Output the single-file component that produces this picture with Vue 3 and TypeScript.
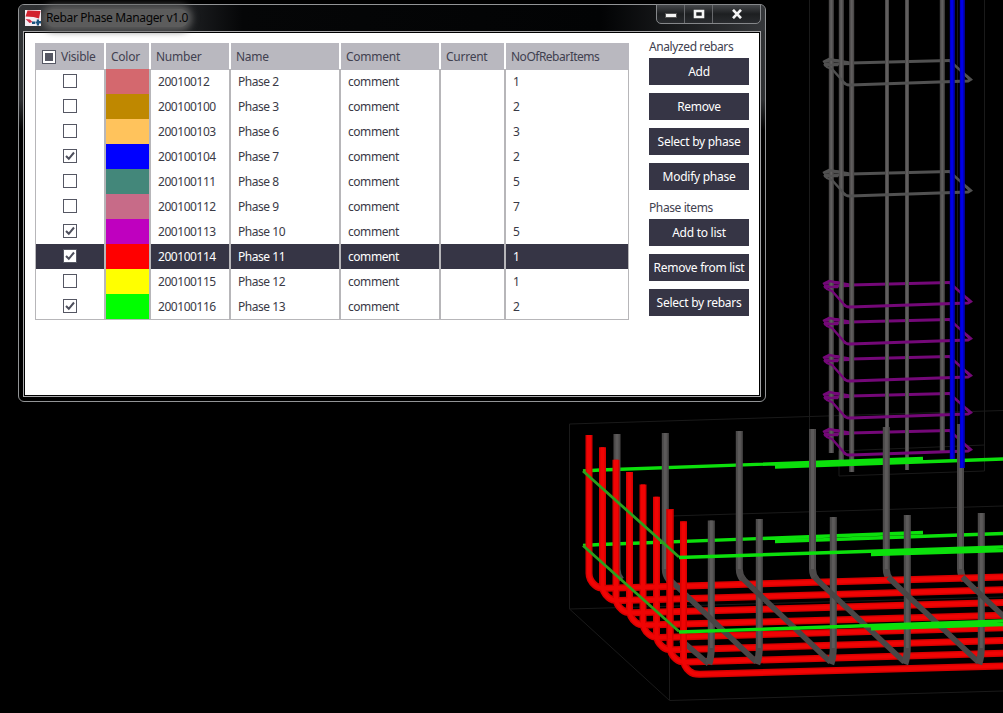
<script setup lang="ts">
interface Phase {
  visible: boolean
  color: string
  number: string
  name: string
  comment: string
  current: string
  items: number
  selected?: boolean
}

const comment = 'comment'
const current = ''
const phases: Phase[] = [
  { visible: false, color: '#d4686e', number: '20010012', name: 'Phase 2', comment, current, items: 1 },
  { visible: false, color: '#bf8800', number: '200100100', name: 'Phase 3', comment, current, items: 2 },
  { visible: false, color: '#ffc35c', number: '200100103', name: 'Phase 6', comment, current, items: 3 },
  { visible: true, color: '#0000ff', number: '200100104', name: 'Phase 7', comment, current, items: 2 },
  { visible: false, color: '#43877a', number: '200100111', name: 'Phase 8', comment, current, items: 5 },
  { visible: false, color: '#c76b88', number: '200100112', name: 'Phase 9', comment, current, items: 7 },
  { visible: true, color: '#bf00bf', number: '200100113', name: 'Phase 10', comment, current, items: 5 },
  { visible: true, color: '#ff0000', number: '200100114', name: 'Phase 11', comment, current, items: 1, selected: true },
  { visible: false, color: '#ffff00', number: '200100115', name: 'Phase 12', comment, current, items: 1 },
  { visible: true, color: '#00ff00', number: '200100116', name: 'Phase 13', comment, current, items: 2 },
]

const headers = ['Color', 'Number', 'Name', 'Comment', 'Current', 'NoOfRebarItems']

const groups = [
  { label: 'Analyzed rebars', buttons: ['Add', 'Remove', 'Select by phase', 'Modify phase'] },
  { label: 'Phase items', buttons: ['Add to list', 'Remove from list', 'Select by rebars'] },
]

// Vertical bars of the column: x, bottom, width
const columnBars = [
  [831.3, 453, 5], [841.3, 463, 5], [851.7, 472, 5],
  [887, 428, 4], [907, 470, 4], [942.3, 452, 5],
]
const blueBars = [[952.3, 459], [962.3, 468]]

// Stirrups around the column
const stirrups = [63, 174, 285, 322, 359, 396, 433].map((y, i) => ({ y, tone: i < 2 ? 'grey' : 'purple' }))

// U-shaped foundation bars: back leg x/top, front leg x/top
const uBars = [
  [617, 434, 711.3, 520.5], [665.3, 433, 759.3, 519], [739.3, 431, 833.3, 517],
  [812.5, 429, 907.3, 515], [886.3, 427, 981.3, 513], [960.5, 424, 1055, 511],
]

// Bottom bars that bend up on the left side
const redBars = Array.from({ length: 8 }, (_, i) => {
  const x = 589 + 13.5 * i
  const y = 588.2 + 12.3 * i
  return `M${x} ${435 + 12.35 * i}V${y - 15}Q${x} ${y - 8} ${x + 6} ${y - 3}Q${x + 10} ${y + 0.4} ${x + 17} ${y}L1005 ${577 + 12.7 * i}`
})
</script>

<template>
  <main class="stage">
    <svg class="scene" width="1003" height="713" viewBox="0 0 1003 713">
      <g class="outline">
        <path d="M809.5 0V476M984.5 0V471L839 476V451L985 445M569.5 609V424L1003 410.5M569.5 609L669.5 700.5L1003 691M669.5 700V516L1003 506M569.5 609L1003 597M957.5 0V440" />
      </g>

      <g v-for="s in stirrups" :key="'b' + s.y" :class="['stirrup', s.tone]" :transform="`translate(0 ${s.y})`">
        <path d="M824 -1.5L836 -2.5L850 0L950 -2.5" />
        <path class="thin" d="M950 -2L971 17" />
        <path d="M850 .5L824 1.5" />
      </g>

      <path v-for="b in columnBars" :key="b[0]" class="bar" :stroke-width="b[2]" :d="`M${b[0]} 0V${b[1]}`" />
      <path v-for="b in columnBars" :key="'h' + b[0]" class="bar-light" :d="`M${b[0]} 0V${b[1]}`" />

      <g v-for="s in stirrups" :key="'f' + s.y" :class="['stirrup', s.tone]" :transform="`translate(0 ${s.y})`">
        <path class="thin" d="M824 1L827 4L832 6L845 20.5" />
        <path class="thin" d="M823 -1L829 -4L840 -2M824 2L838 2" />
        <path d="M844 19.5Q846 22.3 850 22L968 18L970.5 16.5L966 12.5" />
      </g>

      <g class="green">
        <path d="M583 471L600 470L923 458.5M775 467L1003 459" />
        <path d="M583 545.5L600 544.5L923 532.5M775 541.5L1003 533.5" />
      </g>

      <g v-for="b in uBars" :key="'u' + b[0]">
        <path class="bar" stroke-width="7" :d="`M${b[0]} ${b[1]}V569Q${b[0]} 575 ${b[0] + 4} 580`" />
        <path class="bar-light wide" :d="`M${b[0]} ${b[1]}V569`" />
      </g>

      <path v-for="d in redBars" :key="d" class="red" :d="d" />
      <path v-for="d in redBars" :key="'l' + d" class="red-light" :d="d" />

      <g v-for="(b, i) in uBars" :key="'v' + b[0]">
        <path v-if="i > 0" class="diagonal" :d="`M${b[0] + 2} 577L${b[0] + 9} 584L${b[2] - 3} 662`" />
        <path v-else class="diagonal" d="M681 640L708.5 664" />
        <path class="bar" stroke-width="7" :d="`M${b[2]} ${b[3]}V646Q${b[2]} 657 ${b[2] - 2.5} 664`" />
        <path class="bar-light wide" :d="`M${b[2]} ${b[3]}V648`" />
      </g>
      <path v-for="i in [6, 7]" :key="'r' + i" class="red" :d="`M${589 + 13.5 * i} ${435 + 12.35 * i}V${565 + 12.3 * i}`" />
      <path v-for="i in [6, 7]" :key="'rl' + i" class="red-light" :d="`M${589 + 13.5 * i} ${436 + 12.35 * i}V${565 + 12.3 * i}`" />

      <path v-for="b in blueBars" :key="b[0]" class="blue" :d="`M${b[0]} 0V${b[1]}`" />
      <path class="blue-light" d="M951.8 0V459M961.8 0V468" />

      <g class="green">
        <path class="slant" d="M583 471L679 557M583 545.5L679 631.5" />
        <path d="M679 557.5L1003 547M871 554.5L1003 550.5" />
        <path d="M679 632L1003 621M871 628.8L1003 624.5" />
      </g>
    </svg>

    <section class="window">
      <header class="titlebar">
        <svg class="logo" width="16" height="16" viewBox="0 0 16 16">
          <rect width="16" height="16" fill="#f4eef3" />
          <path d="M2.5 .5L15.5 1L14 8.5L8.5 7L.5 6.5Z" fill="#d2222f" />
          <path d="M.5 9L5 9.5L7.5 12L4.5 13Z" fill="#d2304a" />
          <path d="M7 11.5H10V14H7ZM11.8 9.5H14V11H16V13.5H14V15.5H11.8V13.5H10.5V11.5H11.8Z" fill="#1c5580" />
        </svg>
        <h1 class="title">Rebar Phase Manager v1.0</h1>
        <nav class="controls">
          <span class="control minimize">
            <svg width="12" height="6" viewBox="0 0 12 6"><rect x=".5" y=".5" width="11" height="4" fill="#f4f4f4" stroke="#555" /></svg>
          </span>
          <span class="control maximize">
            <svg width="12" height="10" viewBox="0 0 12 10"><path d="M2 2H10V8H2Z" fill="none" stroke="#f4f4f4" stroke-width="2.6" /></svg>
          </span>
          <span class="control close">
            <svg width="12" height="10" viewBox="0 0 12 10"><path d="M2 .8L10 9.2M10 .8L2 9.2" stroke="#f4f4f4" stroke-width="2.6" /></svg>
          </span>
        </nav>
      </header>

      <div class="content">
        <div class="table">
          <div class="row head">
            <div class="cell first">
              <span class="check mixed"></span>
              <span>Visible</span>
            </div>
            <div v-for="h in headers" :key="h" class="cell">{{ h }}</div>
          </div>
          <div v-for="p in phases" :key="p.number" :class="['row', { selected: p.selected }]">
            <div class="cell center">
              <span class="check">
                <svg v-if="p.visible" width="12" height="12" viewBox="0 0 12 12">
                  <path d="M2 6L4.8 8.8L10 2.5" fill="none" stroke="#4d4f5c" stroke-width="2" />
                </svg>
              </span>
            </div>
            <div class="cell" :style="{ background: p.color }"></div>
            <div class="cell">{{ p.number }}</div>
            <div class="cell">{{ p.name }}</div>
            <div class="cell">{{ p.comment }}</div>
            <div class="cell">{{ p.current }}</div>
            <div class="cell">{{ p.items }}</div>
          </div>
        </div>

        <aside class="actions">
          <div v-for="g in groups" :key="g.label" class="group">
            <div class="label">{{ g.label }}</div>
            <button v-for="b in g.buttons" :key="b" type="button">{{ b }}</button>
          </div>
        </aside>
      </div>
    </section>
  </main>
</template>

<style>
body {
  margin: 0;
  background: #000;
}
</style>

<style scoped>
.stage {
  position: relative;
  width: 1003px;
  height: 713px;
  overflow: hidden;
  background: #000;
  font-family: "Noto Sans", "Open Sans", sans-serif;
  font-size: 12px;
}
.scene {
  display: block;
}
.scene path {
  fill: none;
}
.outline path {
  stroke: #1a1a1a;
  stroke-width: 1;
}
.stirrup path {
  stroke-width: 3;
}
.stirrup .thin {
  stroke-width: 2.4;
}
.grey path {
  stroke: #515151;
}
.purple path {
  stroke: #740878;
}
.bar {
  stroke: #4c4a4a;
}
.bar-light {
  stroke: #605e5e;
  stroke-width: 2;
}
.bar-light.wide {
  stroke: #5c5a5a;
  stroke-width: 3;
}
.diagonal {
  stroke: #484646;
  stroke-width: 5.5;
}
.red {
  stroke: #d80000;
  stroke-width: 7;
}
.red-light {
  stroke: #f00404;
  stroke-width: 4;
}
.blue {
  stroke: #0000b8;
  stroke-width: 5;
}
.blue-light {
  stroke: #0000e8;
  stroke-width: 2.4;
}
.green path {
  stroke: #0ce00c;
  stroke-width: 3.4;
}
.green .slant {
  stroke: #2ba01c;
  stroke-width: 2.8;
}

.window {
  position: absolute;
  left: 18px;
  top: 4px;
  box-sizing: border-box;
  width: 748px;
  height: 398px;
  border: 1px solid #929496;
  border-radius: 6px;
  padding: 0 4px 4px;
  background: linear-gradient(#333537 0, #2e3032 95px, #000 125px);
}
.titlebar {
  display: flex;
  align-items: flex-start;
  height: 26px;
  margin: 0 -4px;
  padding-left: 6px;
  border-radius: 5px 5px 0 0;
  background:
    linear-gradient(90deg, #303234 0, #25272a 20%, #050607 30%, #020304 78%, #35373a 100%);
}
.logo {
  flex: none;
  margin-top: 5px;
}
.title {
  height: 18px;
  margin: 4px 0 0 5px;
  border-radius: 8px;
  background: #5c5c5c;
  box-shadow: 0 0 7px 4px #5c5c5c;
  font-size: 12px;
  line-height: 18px;
  font-weight: 400;
  letter-spacing: -0.35px;
  white-space: nowrap;
  color: #050505;
}
.logo {
  position: relative;
  z-index: 1;
}
.controls {
  display: flex;
  box-sizing: border-box;
  width: 105px;
  height: 20px;
  margin: -1px 4px 0 auto;
  border: 1px solid #85878a;
  border-radius: 0 0 5px 5px;
  background: linear-gradient(#45474a, #1d1f21 50%, #292b2e);
}
.control {
  display: flex;
  align-items: center;
  justify-content: center;
  box-sizing: border-box;
  width: 28px;
  border-right: 1px solid #66686b;
}
.control.close {
  width: 47px;
  border: 0;
}
.control svg {
  margin-top: -1px;
}
.control.minimize svg {
  margin-top: 3px;
}

.content {
  display: flex;
  align-items: flex-start;
  box-sizing: border-box;
  width: 738px;
  height: 366px;
  border: 1px solid #a7a7a9;
  padding: 11px 0 0 11px;
  background: #fff;
  box-shadow: inset 0 0 0 1px #000;
}
.table {
  width: 594px;
  border-bottom: 1px solid #b7b6b9;
  color: #3a3a46;
  line-height: 25px;
}
.row {
  display: grid;
  grid-template-columns: 70px 45px 80px 110px 100px 65px 124px;
  height: 25px;
}
.cell {
  box-sizing: border-box;
  border: solid #b7b6b9;
  border-width: 0 1px;
  padding-left: 7px;
  letter-spacing: -0.45px;
  white-space: nowrap;
}
.head {
  height: 26px;
  line-height: 27px;
}
.head .cell {
  border-color: #fff;
  padding-left: 5px;
  background: #b9b8bf;
  color: #414150;
  letter-spacing: -0.25px;
}
.head .first {
  display: flex;
  align-items: center;
  gap: 5px;
  padding-left: 6px;
  border-left-color: #b9b8bf;
}
.head .cell:last-child {
  border-right-color: #b9b8bf;
  letter-spacing: -0.5px;
}
.selected {
  color: #fff;
}
.selected .cell {
  background: #363545;
}
.cell.center {
  display: flex;
  align-items: center;
  justify-content: center;
  padding: 0;
}
.check {
  display: block;
  box-sizing: border-box;
  flex: none;
  width: 14px;
  height: 14px;
  margin-top: -1px;
  border: 1px solid #555763;
  background: #fff;
}
.check svg {
  display: block;
}
.mixed {
  margin-top: 0;
  padding: 2px;
  background: #555763 content-box;
  box-shadow: inset 0 0 0 2px #fff;
}
.actions {
  display: flex;
  flex-direction: column;
  gap: 9px;
  width: 100px;
  margin: -5px 0 0 20px;
}
.group {
  display: flex;
  flex-direction: column;
  gap: 8px;
}
.label {
  height: 19px;
  margin-bottom: -7px;
  line-height: 18px;
  letter-spacing: -0.4px;
  white-space: nowrap;
  color: #414150;
}
button {
  height: 27px;
  border: 0;
  padding: 0;
  background: #363545;
  color: #fff;
  font: inherit;
  letter-spacing: -0.27px;
  white-space: nowrap;
}
</style>
